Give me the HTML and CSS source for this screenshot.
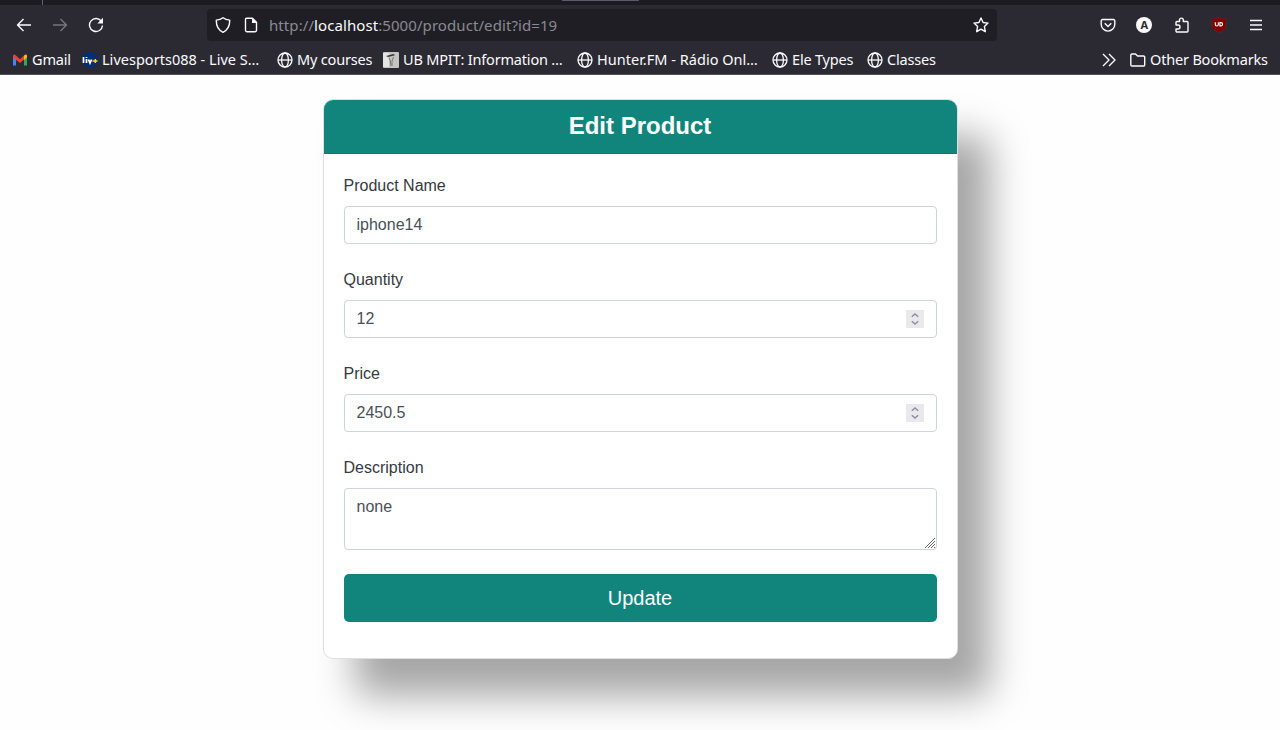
FILE: index.html
```html
<!DOCTYPE html>
<html lang="en">
<head>
<meta charset="utf-8">
<title>Edit Product</title>
<link rel="stylesheet" href="styles.css">
</head>
<body>
<svg class="defs" width="0" height="0">
  <symbol id="globe" viewBox="0 0 16 16"><g fill="none" stroke="currentColor" stroke-width="1.3"><circle cx="8" cy="8" r="7"/><ellipse cx="8" cy="8" rx="3.4" ry="7"/><path d="M1 8h14"/></g></symbol>
  <symbol id="spin" viewBox="0 0 18 18"><path d="M5.800 6.800 9 4l3.200 2.800M5.800 11.200 9 14l3.200-2.800" fill="none" stroke="#8f8f9d" stroke-width="1.500"/></symbol>
</svg>
<header class="browser">
  <div class="tabs"><span class="tab-divider"></span><span class="tab-edge"></span></div>
  <div class="toolbar">
    <svg class="icon back" viewBox="0 0 16 16"><path d="M15 8H1.500M7.500 2 1.500 8l6 6"/></svg>
    <svg class="icon forward" viewBox="0 0 16 16"><path d="M1 8h13.500M8.500 2l6 6-6 6"/></svg>
    <svg class="icon reload" viewBox="0 0 16 16"><path d="M13.500 4.500A6.500 6.500 0 1 0 14.500 8.500"/><path class="solid" d="M15 .8v5.600H9.400z"/></svg>
    <div class="urlbar">
      <svg class="icon" viewBox="0 0 16 16"><path d="M8 .8C6 2.400 3.800 3 1.300 3.100 1.100 9 3.300 13.200 8 15.300c4.700-2.100 6.900-6.300 6.700-12.200C12.200 3 10 2.400 8 .8z"/></svg>
      <svg class="icon page" viewBox="0 0 16 16"><path d="M3.500 1.200H9.500L13.500 5.200V13.200a1.500 1.500 0 0 1-1.500 1.500H4a1.500 1.500 0 0 1-1.500-1.500V2.200a1 1 0 0 1 1-1z"/><path class="solid" d="M9 1v5h5z"/></svg>
      <span class="url">http://<b>localhost</b>:5000/product/edit?id=19</span>
      <svg class="icon star" viewBox="0 0 16 16"><path d="m8 1 2.100 4.500 4.900.6-3.600 3.400.9 5.200L8 12.200l-4.300 2.500.9-5.200L1 6.100l4.900-.6z"/></svg>
    </div>
    <div class="actions">
      <svg class="icon" viewBox="0 0 16 16"><path d="M2.500 2.500h11a1.300 1.300 0 0 1 1.300 1.300V7.300a6.800 6.800 0 0 1-13.600 0V3.800a1.300 1.300 0 0 1 1.300-1.300z"/><path d="m4.700 6.300 3.300 3.200 3.300-3.200"/></svg>
      <span class="account">A</span>
      <svg class="icon" viewBox="0 0 16 16"><path d="M2 8V5.500a1 1 0 0 1 1-1H5.500V3a1.900 1.900 0 0 1 3.800 0v1.500H13a1 1 0 0 1 1 1V14a1 1 0 0 1-1 1H3a1 1 0 0 1-1-1v-2h2a1.900 1.900 0 0 0 0-4z"/></svg>
      <svg class="ublock" viewBox="0 0 16 16"><path d="M8 .3C6 1.600 3.500 1.700 1 1.800V8.500c0 3.500 3.200 5.500 7 7.200 3.800-1.700 7-3.700 7-7.200V1.800C12.500 1.700 10 1.600 8 .3z" fill="#800000" stroke="#6b2b2b" stroke-width=".5"/><path d="M4.300 5.200v2.300q0 1.500 1.500 1.500T7.300 7.500V5.200M8.900 5.600h1a1.600 1.600 0 0 1 0 3.300h-1z" fill="none" stroke="#fff" stroke-width="1.100"/></svg>
      <svg class="icon menu" viewBox="0 0 16 16"><path d="M2 3.500h12M2 8h12M2 12.500h12"/></svg>
    </div>
  </div>
  <nav class="bookmarks">
    <a class="mark m1"><svg viewBox="0 0 16 16"><path d="M1 3.500V13.500h3V6.500z" fill="#4285f4"/><path d="M12 6.500v7h3V3.500z" fill="#34a853"/><path d="M1 3.500 2.500 2.200 8 7.300 12 3.500V7.500L8 11 1 5.500z" fill="#ea4335"/><path d="M12 3.500 14 2.200 15 3.500v2L12 8z" fill="#fbbc04"/></svg><span>Gmail</span></a>
    <a class="mark m2"><svg viewBox="0 0 16 16"><circle cx="8" cy="8" r="8" fill="#062e70"/><path d="M1.500 5v6M4.500 7v4M4.500 5v1M6.500 7.500 8 11 9.500 7.500" stroke="#fff" stroke-width="1.700" fill="none"/><path d="M10.500 9h5M13.300 7v4" stroke="#f2d43a" stroke-width="1.500"/></svg><span>Livesports088 - Live S…</span></a>
    <a class="mark m3"><svg><use href="#globe"/></svg><span>My courses</span></a>
    <a class="mark m4"><svg viewBox="0 0 16 16"><rect width="16" height="16" rx="1" fill="#c4c4c2"/><path d="M0 1h6v14H0z" fill="#e4e4e2"/><path d="M3 4 10.500 2l1.500 1.300L5 5z" fill="#333"/><path d="M6 5.500 7.300 9 8 14M10.500 5 9 9v5" fill="none" stroke="#777" stroke-width="1"/></svg><span>UB MPIT: Information …</span></a>
    <a class="mark m5"><svg><use href="#globe"/></svg><span>Hunter.FM - Rádio Onl…</span></a>
    <a class="mark m6"><svg><use href="#globe"/></svg><span>Ele Types</span></a>
    <a class="mark m7"><svg><use href="#globe"/></svg><span>Classes</span></a>
    <svg class="icon more" viewBox="0 0 16 16"><path d="m2 2 6 6-6 6M8 2l6 6-6 6"/></svg>
    <a class="mark other"><svg class="icon" viewBox="0 0 16 16"><path d="M2 2h3.500l2 2H13.500A1.200 1.200 0 0 1 14.700 5.200v7.600a1.200 1.200 0 0 1-1.200 1.200h-11.500A1.200 1.200 0 0 1 .8 12.800V3.200A1.200 1.200 0 0 1 2 2z"/></svg><span>Other Bookmarks</span></a>
  </nav>
</header>
<main class="page-body">
  <section class="card">
    <h1 class="card-header">Edit Product</h1>
    <form class="card-body">
      <label class="label" for="name">Product Name</label>
      <input class="control" id="name" type="text" value="iphone14">
      <label class="label" for="qty">Quantity</label>
      <div class="control number"><span id="qty">12</span><svg class="spinner"><use href="#spin"/></svg></div>
      <label class="label" for="price">Price</label>
      <div class="control number"><span id="price">2450.5</span><svg class="spinner"><use href="#spin"/></svg></div>
      <label class="label" for="desc">Description</label>
      <div class="control area"><span id="desc">none</span><svg class="grip" viewBox="0 0 12 12"><path d="M1 11 11 1M4 11l7-7M7 11l4-4M10 11l1-1" stroke="#666" stroke-width="1"/></svg></div>
      <button class="submit" type="button">Update</button>
    </form>
  </section>
</main>
</body>
</html>
```
FILE: styles.css
```css
* { box-sizing: border-box; }
body { margin: 0; height: 730px; overflow: hidden; background: #fefefe; font-family: "Liberation Sans", Arial, sans-serif; color: #343a40; }
.defs { display: block; height: 0; }
.browser { height: 75px; background: #2b2a33; border-bottom: 1px solid #53525c; color: #fbfbfe; font-family: "Noto Sans", sans-serif; }
.tabs { height: 5px; background: #1c1b22; display: flex; align-items: flex-start; }
.tab-divider { width: 1px; height: 5px; margin-left: 42px; background: #62616a; }
.tab-edge { width: 77px; height: 1px; margin-left: 519px; background: #5b5b66; }
.toolbar { height: 40px; display: flex; align-items: center; padding: 0 16px; }
.icon { width: 16px; height: 16px; flex: none; fill: none; stroke: currentColor; stroke-width: 1.4; stroke-linejoin: round; }
.icon .solid { fill: currentColor; stroke: none; }
.forward { margin-left: 20px; color: #77767e; }
.reload { margin-left: 20px; }
.urlbar { width: 790px; height: 32px; margin-left: 103px; padding: 0 8px; display: flex; align-items: center; background: #1f1e25; border-radius: 4px; }
.page { margin-left: 12px; }
.url { margin-left: 10px; font-size: 15px; letter-spacing: .08px; color: #8b8a91; white-space: nowrap; }
.url b { color: #fbfbfe; font-weight: 400; }
.star { margin-left: auto; }
.actions { display: flex; align-items: center; justify-content: space-between; flex: 1; margin-left: 103px; }
.account { width: 16px; height: 16px; margin-left: -1px; border-radius: 50%; background: #fbfbfe; color: #2b2a33; font-size: 11px; line-height: 16px; font-weight: 700; text-align: center; }
.ublock { width: 16px; height: 16px; flex: none; }
.bookmarks { height: 29px; display: flex; align-items: center; padding: 0 12px; font-size: 14.5px; }
.mark { display: flex; align-items: center; gap: 4px; flex: none; white-space: nowrap; }
.mark span { letter-spacing: -.18px; padding-bottom: 2px; }
.mark svg { width: 16px; height: 16px; flex: none; }
.m1 { width: 70px; }
.m2 { width: 195px; }
.m2 span, .m5 span { letter-spacing: .02px; }
.m3 { width: 106px; }
.m4 { width: 194px; }
.m5 { width: 195px; }
.m6 { width: 95px; }
.m7 { width: 75px; }
.more { margin-left: auto; margin-right: 13px; }
.other { width: 138px; }
.page-body { padding: 24px 0 0 322.5px; }
.card { width: 635px; height: 560px; background: #fff; border: 1px solid #dfdfdf; border-radius: 10px; box-shadow: 32px 37px 38px rgba(0,0,0,.35); }
.card-header { height: 54px; margin: 0; padding-top: 11px; background: #11857c; border-bottom: 1px solid #0f776f; border-radius: 9px 9px 0 0; color: #fff; font-size: 24px; line-height: 29px; text-align: center; }
.card-body { padding: 20px; display: flex; flex-direction: column; }
.label { height: 24px; margin-bottom: 8px; line-height: 24px; font-size: 16px; }
.control { width: 593px; height: 38px; margin-bottom: 24px; padding: 0 12px; border: 1px solid #ced4da; border-radius: 4px; background: #fff; color: #495057; font: 16px/36px "Liberation Sans", Arial, sans-serif; }
.number { display: flex; align-items: center; justify-content: space-between; }
.spinner { width: 18px; height: 18px; background: #e9e9ed; }
.area { height: 62px; padding: 0 0 0 12px; display: flex; justify-content: space-between; }
.grip { width: 12px; height: 12px; align-self: flex-end; }
.submit { height: 48px; padding: 0; border: 0; border-radius: 5px; background: #11857c; color: #fff; font: 20px/48px "Liberation Sans", Arial, sans-serif; }
```
